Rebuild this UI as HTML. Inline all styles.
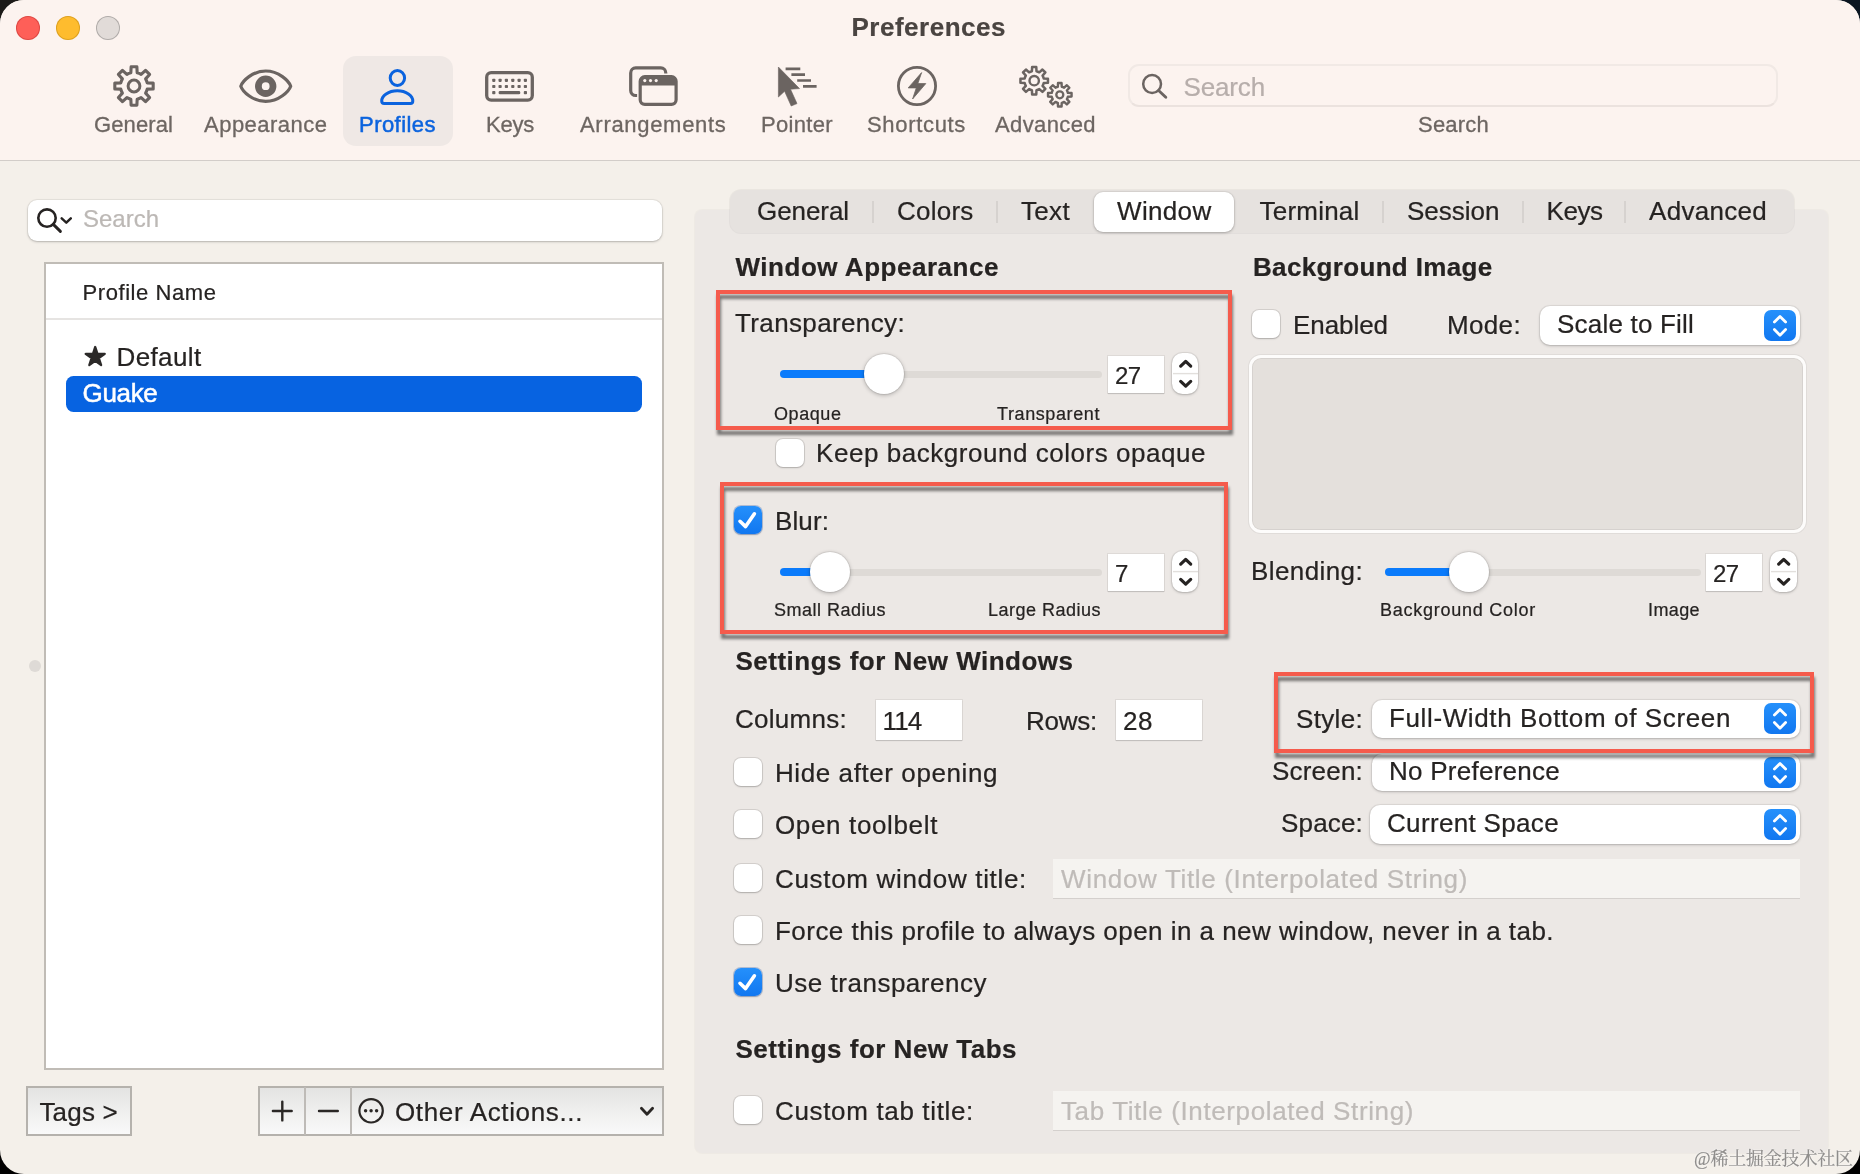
<!DOCTYPE html>
<html lang="en"><head><meta charset="utf-8"><title>Preferences</title>
<style>
html,body{margin:0;padding:0;}
body{width:1860px;height:1174px;overflow:hidden;background:#000;font-family:"Liberation Sans",sans-serif;color:#262322;position:relative;}
.abs,.t,.win *{position:absolute;box-sizing:border-box;}
.t{white-space:pre;height:40px;line-height:40px;-webkit-text-stroke:0.22px currentColor;}
.win{will-change:transform;position:absolute;left:0;top:0;width:1860px;height:1174px;border-radius:24px;background:#f4f0ea;overflow:hidden;}
.titlebar{left:0;top:0;width:1860px;height:161.2px;background:#fcf3ef;border-bottom:1.4px solid #d2cdc9;}
.tl{width:24px;height:24px;border-radius:50%;top:16px;}
.cb{width:27.5px;height:27.4px;margin:0.2px 0 0 0.2px;border-radius:7px;background:#fff;box-shadow:0 0 0 1px rgba(0,0,0,.10),0 1px 2px rgba(0,0,0,.18);}
.cb.on{background:linear-gradient(#2590fb,#1177f0);box-shadow:0 0 0 1px rgba(0,60,160,.25),0 1px 2px rgba(0,0,0,.2);}
.fld{background:#fff;box-shadow:0 0 0 1px rgba(0,0,0,.06),0 1px 1px rgba(0,0,0,.12);}
.fld.dis{background:#f5f3f0;box-shadow:0 1px 0 rgba(0,0,0,.10);}
.sel{background:#fff;border-radius:10px;box-shadow:0 0 0 1px rgba(0,0,0,.05),0 1px 3px rgba(0,0,0,.22);}
.selbtn{width:32px;height:31px;border-radius:7px;background:linear-gradient(#2590fb,#1177f0);}
.step{width:26.6px;height:40.6px;border-radius:10.5px;background:#fff;box-shadow:0 0 0 1px rgba(0,0,0,.06),0 1px 3px rgba(0,0,0,.22);}
.track{height:7px;border-radius:4px;background:#dedad6;}
.fill{height:8px;border-radius:4px;background:#0b7bfb;}
.knob{width:40px;height:40px;border-radius:50%;background:#fff;box-shadow:0 0 0 1px rgba(0,0,0,.06),0 1px 4px rgba(0,0,0,.28);}
.red{border:4.2px solid #f55b4c;filter:drop-shadow(1px 5px 1.5px rgba(0,0,0,.5));}
.btn{border:2px solid #b5b2ad;background:linear-gradient(#e3e3e2,#eeeeed 45%,#f9f9f9);}
svg{position:absolute;overflow:visible;}

</style></head>
<body>
<div class="abs" style="left:0;top:0;width:60px;height:60px;background:#1c1a18"></div><div class="abs" style="left:1800px;top:0;width:60px;height:60px;background:#0a1520"></div>
<div class="win">
<div class="titlebar"></div>
<div class="tl" style="left:16px;background:#fe5f58;box-shadow:inset 0 0 0 1px rgba(160,30,30,.35)"></div>
<div class="tl" style="left:56px;background:#febc2e;box-shadow:inset 0 0 0 1px rgba(160,110,0,.35)"></div>
<div class="tl" style="left:96px;background:#e1dbd8;box-shadow:inset 0 0 0 1px rgba(0,0,0,.22)"></div>
<div class="t" style="left:851.5px;top:6.5px;font-size:26px;font-weight:700;color:#4a4441;letter-spacing:0.510px;">Preferences</div>
<div style="left:343px;top:56px;width:110px;height:90px;border-radius:13px;background:#efe8e5"></div>
<div class="t" style="left:94px;top:105px;font-size:22px;color:#6d6662;letter-spacing:0.103px;-webkit-text-stroke:0.3px currentColor;">General</div>
<div class="t" style="left:204px;top:105px;font-size:22px;color:#6d6662;letter-spacing:0.484px;-webkit-text-stroke:0.3px currentColor;">Appearance</div>
<div class="t" style="left:359px;top:105px;font-size:22px;color:#0b63de;letter-spacing:0.455px;-webkit-text-stroke:0.5px currentColor;">Profiles</div>
<div class="t" style="left:486px;top:105px;font-size:22px;color:#6d6662;letter-spacing:-0.230px;-webkit-text-stroke:0.3px currentColor;">Keys</div>
<div class="t" style="left:580px;top:105px;font-size:22px;color:#6d6662;letter-spacing:0.693px;-webkit-text-stroke:0.3px currentColor;">Arrangements</div>
<div class="t" style="left:761px;top:105px;font-size:22px;color:#6d6662;letter-spacing:0.326px;-webkit-text-stroke:0.3px currentColor;">Pointer</div>
<div class="t" style="left:867px;top:105px;font-size:22px;color:#6d6662;letter-spacing:0.674px;-webkit-text-stroke:0.3px currentColor;">Shortcuts</div>
<div class="t" style="left:995px;top:105px;font-size:22px;color:#6d6662;letter-spacing:0.393px;-webkit-text-stroke:0.3px currentColor;">Advanced</div>
<div class="t" style="left:1418px;top:105px;font-size:22px;color:#6d6662;letter-spacing:0.214px;-webkit-text-stroke:0.3px currentColor;">Search</div>
<div style="left:1128.4px;top:64.2px;width:650px;height:43px;border-radius:11px;background:#fcf3ef;border:2px solid #f1e9e5;border-bottom-color:#ebe2de"></div>
<div class="t" style="left:1183.5px;top:66.5px;font-size:26px;color:#b7aeab;letter-spacing:-0.148px;">Search</div>
<svg style="left:1140px;top:72px" width="30" height="30" viewBox="0 0 30 30"><circle cx="12.1" cy="12" r="8.9" fill="none" stroke="#6b6461" stroke-width="2.5"/><path d="M18.6 18.5 L25.8 25.2" stroke="#6b6461" stroke-width="2.9" stroke-linecap="round"/></svg>
<svg style="left:0;top:0" width="1860" height="160" viewBox="0 0 1860 160"><path d="M130.83 72.78L131.12 66.82L136.88 66.82L137.17 72.78A13.60 13.60 0 0 1 141.11 74.40L145.53 70.40L149.60 74.47L145.60 78.89A13.60 13.60 0 0 1 147.22 82.83L153.18 83.12L153.18 88.88L147.22 89.17A13.60 13.60 0 0 1 145.60 93.11L149.60 97.53L145.53 101.60L141.11 97.60A13.60 13.60 0 0 1 137.17 99.22L136.88 105.18L131.12 105.18L130.83 99.22A13.60 13.60 0 0 1 126.89 97.60L122.47 101.60L118.40 97.53L122.40 93.11A13.60 13.60 0 0 1 120.78 89.17L114.82 88.88L114.82 83.12L120.78 82.83A13.60 13.60 0 0 1 122.40 78.89L118.40 74.47L122.47 70.40L126.89 74.40A13.60 13.60 0 0 1 130.83 72.78Z" fill="none" stroke="#6b6461" stroke-width="3.1" stroke-linejoin="round"/><circle cx="134" cy="86" r="5.9" fill="none" stroke="#6b6461" stroke-width="3"/></svg>
<svg style="left:0;top:0" width="1860" height="160" viewBox="0 0 1860 160"><path d="M240.8 86.2 C242.6 81 252.5 71 265.7 71 C278.9 71 288.8 81 290.7 86.2 C288.8 91.4 278.9 101.4 265.7 101.4 C252.5 101.4 242.6 91.4 240.8 86.2Z" fill="none" stroke="#6b6461" stroke-width="3.2" stroke-linejoin="round"/><circle cx="265.7" cy="86.2" r="7.3" fill="none" stroke="#6b6461" stroke-width="6.8"/></svg>
<svg style="left:0;top:0" width="1860" height="160" viewBox="0 0 1860 160"><ellipse cx="397.4" cy="78" rx="7.2" ry="7.5" fill="none" stroke="#0b63de" stroke-width="3"/><path d="M384.2 103.6 H410.4 Q412.8 103.6 412.8 101 C412.8 96 406.3 90.8 397.3 90.8 C388.3 90.8 381.7 96 381.7 101 Q381.7 103.6 384.2 103.6Z" fill="none" stroke="#0b63de" stroke-width="3" stroke-linejoin="round"/></svg>
<svg style="left:0;top:0" width="1860" height="160" viewBox="0 0 1860 160"><rect x="486.7" y="72.7" width="45.6" height="27.4" rx="4.5" fill="none" stroke="#6b6461" stroke-width="3.3"/><rect x="492.2" y="78.7" width="3.2" height="3.2" rx="0.8" fill="#6b6461"/><rect x="498.5" y="78.7" width="3.2" height="3.2" rx="0.8" fill="#6b6461"/><rect x="504.8" y="78.7" width="3.2" height="3.2" rx="0.8" fill="#6b6461"/><rect x="511.2" y="78.7" width="3.2" height="3.2" rx="0.8" fill="#6b6461"/><rect x="517.5" y="78.7" width="3.2" height="3.2" rx="0.8" fill="#6b6461"/><rect x="523.8" y="78.7" width="3.2" height="3.2" rx="0.8" fill="#6b6461"/><rect x="492.2" y="84.9" width="3.2" height="3.2" rx="0.8" fill="#6b6461"/><rect x="498.5" y="84.9" width="3.2" height="3.2" rx="0.8" fill="#6b6461"/><rect x="504.8" y="84.9" width="3.2" height="3.2" rx="0.8" fill="#6b6461"/><rect x="511.2" y="84.9" width="3.2" height="3.2" rx="0.8" fill="#6b6461"/><rect x="517.5" y="84.9" width="3.2" height="3.2" rx="0.8" fill="#6b6461"/><rect x="523.8" y="84.9" width="3.2" height="3.2" rx="0.8" fill="#6b6461"/><rect x="492.2" y="91.1" width="3.2" height="3.2" rx="0.8" fill="#6b6461"/><rect x="523.8" y="91.1" width="3.2" height="3.2" rx="0.8" fill="#6b6461"/><rect x="498.6" y="91.1" width="21.7" height="3.2" rx="1.4" fill="#6b6461"/></svg>
<svg style="left:0;top:0" width="1860" height="160" viewBox="0 0 1860 160"><rect x="630.7" y="67.9" width="35.1" height="27.6" rx="5" fill="none" stroke="#6b6461" stroke-width="3.2"/><rect x="638.6" y="75.1" width="39.1" height="30.9" rx="6.2" fill="#fcf3ef" stroke="#fcf3ef" stroke-width="3"/><rect x="640.2" y="76.7" width="35.9" height="27.7" rx="4.6" fill="#fcf3ef" stroke="#6b6461" stroke-width="3.2"/><path d="M640 85.4 V81 Q640 76.5 644.5 76.5 H671.8 Q676.3 76.5 676.3 81 V85.4Z" fill="#6b6461"/><circle cx="644.8" cy="80.6" r="1.6" fill="#fcf3ef"/><circle cx="650.5" cy="80.6" r="1.6" fill="#fcf3ef"/><circle cx="656.2" cy="80.6" r="1.6" fill="#fcf3ef"/></svg>
<svg style="left:0;top:0" width="1860" height="160" viewBox="0 0 1860 160"><path d="M778.4 67 V97 L784.6 91.3 L791.2 106 L797 103.6 L790.5 89.2 L799.5 88.6Z" fill="#6b6461" stroke="#6b6461" stroke-width="0.6" stroke-linejoin="round"/><path d="M785.6 68.9H800.3 M791.4 74.7H805 M797.2 80.5H811 M803 86.3H816.6" stroke="#6b6461" stroke-width="2.7"/></svg>
<svg style="left:0;top:0" width="1860" height="160" viewBox="0 0 1860 160"><circle cx="917" cy="86" r="18.6" fill="none" stroke="#6b6461" stroke-width="2.8"/><path d="M921.6 72.6 L908.2 87.9 H916.3 L912.6 99 L925.8 83.6 H917.8Z" fill="#6b6461" stroke="#6b6461" stroke-width="0.8" stroke-linejoin="round"/></svg>
<svg style="left:0;top:0" width="1860" height="160" viewBox="0 0 1860 160"><path d="M1031.91 71.17L1032.13 66.95L1036.27 66.95L1036.49 71.17A9.80 9.80 0 0 1 1039.32 72.34L1042.46 69.52L1045.38 72.44L1042.56 75.58A9.80 9.80 0 0 1 1043.73 78.41L1047.95 78.63L1047.95 82.77L1043.73 82.99A9.80 9.80 0 0 1 1042.56 85.82L1045.38 88.96L1042.46 91.88L1039.32 89.06A9.80 9.80 0 0 1 1036.49 90.23L1036.27 94.45L1032.13 94.45L1031.91 90.23A9.80 9.80 0 0 1 1029.08 89.06L1025.94 91.88L1023.02 88.96L1025.84 85.82A9.80 9.80 0 0 1 1024.67 82.99L1020.45 82.77L1020.45 78.63L1024.67 78.41A9.80 9.80 0 0 1 1025.84 75.58L1023.02 72.44L1025.94 69.52L1029.08 72.34A9.80 9.80 0 0 1 1031.91 71.17Z" fill="none" stroke="#6b6461" stroke-width="2.5" stroke-linejoin="round"/><circle cx="1034.2" cy="80.7" r="4.7" fill="none" stroke="#6b6461" stroke-width="2.4"/><path d="M1057.86 86.73L1058.03 83.03L1061.57 83.03L1061.74 86.73A8.30 8.30 0 0 1 1064.14 87.72L1066.87 85.23L1069.37 87.73L1066.88 90.46A8.30 8.30 0 0 1 1067.87 92.86L1071.57 93.03L1071.57 96.57L1067.87 96.74A8.30 8.30 0 0 1 1066.88 99.14L1069.37 101.87L1066.87 104.37L1064.14 101.88A8.30 8.30 0 0 1 1061.74 102.87L1061.57 106.57L1058.03 106.57L1057.86 102.87A8.30 8.30 0 0 1 1055.46 101.88L1052.73 104.37L1050.23 101.87L1052.72 99.14A8.30 8.30 0 0 1 1051.73 96.74L1048.03 96.57L1048.03 93.03L1051.73 92.86A8.30 8.30 0 0 1 1052.72 90.46L1050.23 87.73L1052.73 85.23L1055.46 87.72A8.30 8.30 0 0 1 1057.86 86.73Z" fill="none" stroke="#6b6461" stroke-width="2.4" stroke-linejoin="round"/><circle cx="1059.8" cy="94.8" r="3.5" fill="none" stroke="#6b6461" stroke-width="2.3"/></svg>
<div style="left:28px;top:200px;width:634px;height:40.5px;border-radius:9px;background:#fff;box-shadow:0 0 0 1px rgba(0,0,0,.05),0 1px 2.5px rgba(0,0,0,.22)"></div>
<svg style="left:36px;top:206px" width="40" height="30" viewBox="0 0 40 30"><circle cx="11" cy="12.1" r="8.7" fill="none" stroke="#262322" stroke-width="2.6"/><path d="M17.3 18.4 L24.4 25.4" stroke="#262322" stroke-width="2.9" stroke-linecap="round"/><path d="M25.7 12.4 L30.3 16.6 L34.8 12.4" fill="none" stroke="#262322" stroke-width="2.5" stroke-linecap="round" stroke-linejoin="round"/></svg>
<div class="t" style="left:83px;top:199.3px;font-size:24px;color:#bcb8b5;letter-spacing:-0.008px;">Search</div>
<div style="left:44px;top:262px;width:620px;height:808px;background:#fff;border:2px solid #c0bcb6"></div>
<div class="t" style="left:82.5px;top:272.6px;font-size:22px;letter-spacing:0.570px;">Profile Name</div>
<div style="left:46px;top:318px;width:616px;height:2px;background:#e6e4e2"></div>
<svg style="left:78px;top:338px" width="36" height="36" viewBox="0 0 36 36"><text x="17.2" y="27.4" text-anchor="middle" font-family="DejaVu Sans, sans-serif" font-size="25" fill="#2b2928" stroke="#2b2928" stroke-width="2.2" stroke-linejoin="round">★</text></svg>
<div class="t" style="left:116.5px;top:336.6px;font-size:26px;letter-spacing:0.373px;">Default</div>
<div style="left:66px;top:376px;width:576px;height:35.7px;border-radius:7.5px;background:#0763e1"></div>
<div class="t" style="left:82.5px;top:372.6px;font-size:26px;color:#fff;letter-spacing:-0.322px;-webkit-text-stroke:0.5px #fff;">Guake</div>
<div style="left:29px;top:659.9px;width:12px;height:12px;border-radius:50%;background:#dedad6"></div>
<div class="btn" style="left:26px;top:1086px;width:106px;height:50px"></div>
<div class="t" style="left:39.4px;top:1091.6px;font-size:26px;letter-spacing:0.195px;">Tags &gt;</div>
<div class="btn" style="left:258px;top:1086px;width:406px;height:50px"></div>
<div style="left:304px;top:1087px;width:2px;height:48px;background:#bebbb7"></div>
<div style="left:350px;top:1087px;width:2px;height:48px;background:#bebbb7"></div>
<svg style="left:258px;top:1086px" width="100" height="50" viewBox="0 0 100 50"><path d="M14.9 25H33.7 M24.3 15.6V34.4 M61 25H79.8" stroke="#2a2725" stroke-width="2.4" stroke-linecap="round"/></svg>
<div class="t" style="left:395px;top:1091.6px;font-size:26px;letter-spacing:0.641px;">Other Actions...</div>
<svg style="left:350px;top:1086px" width="314" height="50" viewBox="0 0 314 50"><circle cx="21.1" cy="24.8" r="11.7" fill="none" stroke="#2a2725" stroke-width="2.2"/><circle cx="15.6" cy="24.8" r="1.7" fill="#2a2725"/><circle cx="21.1" cy="24.8" r="1.7" fill="#2a2725"/><circle cx="26.6" cy="24.8" r="1.7" fill="#2a2725"/><path d="M291.4 22.2 L297 28.2 L302.6 22.2" fill="none" stroke="#2a2725" stroke-width="2.8" stroke-linecap="round" stroke-linejoin="round"/></svg>
<div style="left:694.5px;top:210px;width:1133px;height:942.5px;border-radius:7px;background:#ece8e5;box-shadow:0 0 0 1px rgba(0,0,0,.025)"></div>
<div style="left:730px;top:190px;width:1064px;height:43px;border-radius:11px;background:#e6e2df;box-shadow:0 0 0 1px rgba(0,0,0,.04)"></div>
<div style="left:1094px;top:192px;width:140px;height:40px;border-radius:9px;background:#fff;box-shadow:0 1px 3px rgba(0,0,0,.25),0 0 0 1px rgba(0,0,0,.04)"></div>
<div style="left:872px;top:201px;width:2px;height:22px;background:#d6d2cf"></div>
<div style="left:996px;top:201px;width:2px;height:22px;background:#d6d2cf"></div>
<div style="left:1382px;top:201px;width:2px;height:22px;background:#d6d2cf"></div>
<div style="left:1522px;top:201px;width:2px;height:22px;background:#d6d2cf"></div>
<div style="left:1624px;top:201px;width:2px;height:22px;background:#d6d2cf"></div>
<div class="t" style="left:757px;top:191px;font-size:26px;letter-spacing:-0.071px;">General</div>
<div class="t" style="left:897px;top:191px;font-size:26px;letter-spacing:0.227px;">Colors</div>
<div class="t" style="left:1021px;top:191px;font-size:26px;letter-spacing:0.328px;">Text</div>
<div class="t" style="left:1117px;top:191px;font-size:26px;letter-spacing:0.336px;">Window</div>
<div class="t" style="left:1259.5px;top:191px;font-size:26px;letter-spacing:0.219px;">Terminal</div>
<div class="t" style="left:1407px;top:191px;font-size:26px;letter-spacing:0.000px;">Session</div>
<div class="t" style="left:1546.5px;top:191px;font-size:26px;letter-spacing:-0.453px;">Keys</div>
<div class="t" style="left:1649px;top:191px;font-size:26px;letter-spacing:0.293px;">Advanced</div>
<div class="t" style="left:735.5px;top:247px;font-size:26px;font-weight:700;letter-spacing:0.528px;">Window Appearance</div>
<div class="t" style="left:1253px;top:247px;font-size:26px;font-weight:700;letter-spacing:0.340px;">Background Image</div>
<div class="t" style="left:735.5px;top:641px;font-size:26px;font-weight:700;letter-spacing:0.491px;">Settings for New Windows</div>
<div class="t" style="left:735.5px;top:1029px;font-size:26px;font-weight:700;letter-spacing:0.495px;">Settings for New Tabs</div>
<div class="t" style="left:735px;top:302.5px;font-size:26px;letter-spacing:0.368px;">Transparency:</div>
<div class="track" style="left:780px;top:370.5px;width:321.5px"></div>
<div class="fill" style="left:780px;top:370px;width:104px"></div>
<div class="knob" style="left:864px;top:354px"></div>
<div class="fld" style="left:1108px;top:356px;width:56px;height:37px"></div>
<div class="t" style="left:1115px;top:355.5px;font-size:24px;letter-spacing:-0.602px;">27</div>
<div class="step" style="left:1171.6px;top:353px"></div>
<svg style="left:1171.6px;top:353px" width="27" height="41" viewBox="0 0 27 41"><path d="M8.7 13.1 L13.7 8.4 L18.7 13.1 M8.7 28.4 L13.7 33.1 L18.7 28.4" fill="none" stroke="#262322" stroke-width="3.2" stroke-linecap="round" stroke-linejoin="round"/><path d="M1 20.6H26" stroke="#e2dfdc" stroke-width="1.4"/></svg>
<div class="t" style="left:774px;top:394px;font-size:18px;letter-spacing:0.573px;">Opaque</div>
<div class="t" style="left:997px;top:394px;font-size:18px;letter-spacing:0.601px;">Transparent</div>
<div class="cb" style="left:776px;top:439px"></div>
<div class="t" style="left:816px;top:433px;font-size:26px;letter-spacing:0.538px;">Keep background colors opaque</div>
<div class="red" style="left:716px;top:289.8px;width:515.8px;height:140.1px"></div>
<div class="cb on" style="left:734px;top:506px"></div>
<svg style="left:734px;top:506px" width="28" height="28" viewBox="0 0 28 28"><path d="M6 15.3 L11.6 20.6 L20.4 7.8" fill="none" stroke="#fff" stroke-width="3.6" stroke-linecap="round" stroke-linejoin="round"/></svg>
<div class="t" style="left:775px;top:501px;font-size:26px;letter-spacing:0.106px;">Blur:</div>
<div class="track" style="left:780px;top:568.5px;width:321.5px"></div>
<div class="fill" style="left:780px;top:568px;width:50px"></div>
<div class="knob" style="left:810px;top:552px"></div>
<div class="fld" style="left:1108px;top:554px;width:56px;height:37px"></div>
<div class="t" style="left:1115px;top:553.5px;font-size:24px;">7</div>
<div class="step" style="left:1171.6px;top:551px"></div>
<svg style="left:1171.6px;top:551px" width="27" height="41" viewBox="0 0 27 41"><path d="M8.7 13.1 L13.7 8.4 L18.7 13.1 M8.7 28.4 L13.7 33.1 L18.7 28.4" fill="none" stroke="#262322" stroke-width="3.2" stroke-linecap="round" stroke-linejoin="round"/><path d="M1 20.6H26" stroke="#e2dfdc" stroke-width="1.4"/></svg>
<div class="t" style="left:774px;top:590px;font-size:18px;letter-spacing:0.496px;">Small Radius</div>
<div class="t" style="left:988px;top:590px;font-size:18px;letter-spacing:0.493px;">Large Radius</div>
<div class="red" style="left:720px;top:482.3px;width:508.2px;height:151.5px"></div>
<div class="t" style="left:735px;top:699px;font-size:26px;letter-spacing:0.271px;">Columns:</div>
<div class="fld" style="left:876px;top:700px;width:86px;height:40px"></div>
<div class="t" style="left:882.5px;top:701px;font-size:26px;letter-spacing:-0.818px;">114</div>
<div class="t" style="left:1026px;top:701px;font-size:26px;letter-spacing:-0.250px;">Rows:</div>
<div class="fld" style="left:1116px;top:700px;width:86px;height:40px"></div>
<div class="t" style="left:1123px;top:701px;font-size:26px;letter-spacing:0.539px;">28</div>
<div class="cb" style="left:734px;top:758px"></div>
<div class="t" style="left:775px;top:753px;font-size:26px;letter-spacing:0.584px;">Hide after opening</div>
<div class="cb" style="left:734px;top:810px"></div>
<div class="t" style="left:775px;top:805px;font-size:26px;letter-spacing:0.641px;">Open toolbelt</div>
<div class="cb" style="left:734px;top:864px"></div>
<div class="t" style="left:775px;top:859px;font-size:26px;letter-spacing:0.679px;">Custom window title:</div>
<div class="cb" style="left:734px;top:916px"></div>
<div class="t" style="left:775px;top:911px;font-size:26px;letter-spacing:0.460px;">Force this profile to always open in a new window, never in a tab.</div>
<div class="cb on" style="left:734px;top:968px"></div>
<svg style="left:734px;top:968px" width="28" height="28" viewBox="0 0 28 28"><path d="M6 15.3 L11.6 20.6 L20.4 7.8" fill="none" stroke="#fff" stroke-width="3.6" stroke-linecap="round" stroke-linejoin="round"/></svg>
<div class="t" style="left:775px;top:963px;font-size:26px;letter-spacing:0.515px;">Use transparency</div>
<div class="cb" style="left:734px;top:1096px"></div>
<div class="t" style="left:775px;top:1091px;font-size:26px;letter-spacing:0.655px;">Custom tab title:</div>
<div class="fld dis" style="left:1053px;top:859px;width:747px;height:39px"></div>
<div class="t" style="left:1061px;top:859px;font-size:26px;color:#bfbbb8;letter-spacing:0.665px;">Window Title (Interpolated String)</div>
<div class="fld dis" style="left:1053px;top:1091px;width:747px;height:39px"></div>
<div class="t" style="left:1061px;top:1091px;font-size:26px;color:#bfbbb8;letter-spacing:0.618px;">Tab Title (Interpolated String)</div>
<div class="cb" style="left:1252px;top:310px"></div>
<div class="t" style="left:1293px;top:305px;font-size:26px;letter-spacing:-0.060px;">Enabled</div>
<div class="t" style="left:1447px;top:305px;font-size:26px;letter-spacing:0.347px;">Mode:</div>
<div class="sel" style="left:1540px;top:306px;width:260px;height:39px"></div>
<div class="selbtn" style="left:1764px;top:309.7px"></div>
<svg style="left:1764px;top:309.7px" width="32" height="32" viewBox="0 0 32 32"><path d="M10.4 12.1 L16 6.5 L21.6 12.1 M10.4 19.6 L16 25.2 L21.6 19.6" fill="none" stroke="#fff" stroke-width="2.8" stroke-linecap="round" stroke-linejoin="round"/></svg>
<div class="t" style="left:1557px;top:304px;font-size:26px;letter-spacing:0.201px;">Scale to Fill</div>
<div style="left:1248.5px;top:354.5px;width:557px;height:178px;border-radius:12px;background:#e4e0dc;border:3.5px solid #fdfcfb;box-shadow:0 0 0 1px rgba(0,0,0,.05), inset 0 0 0 1px rgba(0,0,0,.06)"></div>
<div class="t" style="left:1251px;top:551px;font-size:26px;letter-spacing:0.398px;">Blending:</div>
<div class="track" style="left:1384.5px;top:568.5px;width:316.0px"></div>
<div class="fill" style="left:1384.5px;top:568px;width:84.5px"></div>
<div class="knob" style="left:1449px;top:552px"></div>
<div class="fld" style="left:1706px;top:554px;width:56px;height:37px"></div>
<div class="t" style="left:1713px;top:553.5px;font-size:24px;letter-spacing:-0.602px;">27</div>
<div class="step" style="left:1770.2px;top:551px"></div>
<svg style="left:1770.2px;top:551px" width="27" height="41" viewBox="0 0 27 41"><path d="M8.7 13.1 L13.7 8.4 L18.7 13.1 M8.7 28.4 L13.7 33.1 L18.7 28.4" fill="none" stroke="#262322" stroke-width="3.2" stroke-linecap="round" stroke-linejoin="round"/><path d="M1 20.6H26" stroke="#e2dfdc" stroke-width="1.4"/></svg>
<div class="t" style="left:1380px;top:590px;font-size:18px;letter-spacing:0.744px;">Background Color</div>
<div class="t" style="left:1648px;top:590px;font-size:18px;letter-spacing:0.394px;">Image</div>
<div class="t" style="left:1272px;top:750.5px;font-size:26px;letter-spacing:0.199px;">Screen:</div>
<div class="sel" style="left:1372px;top:754px;width:428px;height:37px"></div>
<div class="selbtn" style="left:1764px;top:756.7px"></div>
<svg style="left:1764px;top:756.7px" width="32" height="32" viewBox="0 0 32 32"><path d="M10.4 12.1 L16 6.5 L21.6 12.1 M10.4 19.6 L16 25.2 L21.6 19.6" fill="none" stroke="#fff" stroke-width="2.8" stroke-linecap="round" stroke-linejoin="round"/></svg>
<div class="t" style="left:1389px;top:751px;font-size:26px;letter-spacing:0.257px;">No Preference</div>
<div class="t" style="left:1281px;top:803px;font-size:26px;letter-spacing:0.174px;">Space:</div>
<div class="sel" style="left:1370px;top:805px;width:430px;height:39px"></div>
<div class="selbtn" style="left:1764px;top:808.7px"></div>
<svg style="left:1764px;top:808.7px" width="32" height="32" viewBox="0 0 32 32"><path d="M10.4 12.1 L16 6.5 L21.6 12.1 M10.4 19.6 L16 25.2 L21.6 19.6" fill="none" stroke="#fff" stroke-width="2.8" stroke-linecap="round" stroke-linejoin="round"/></svg>
<div class="t" style="left:1387px;top:803px;font-size:26px;letter-spacing:0.334px;">Current Space</div>
<div style="left:1279px;top:677px;width:529px;height:71px;background:#ece8e5"></div>
<div class="t" style="left:1296px;top:698.5px;font-size:26px;letter-spacing:0.328px;">Style:</div>
<div class="sel" style="left:1372px;top:700px;width:428px;height:38px"></div>
<div class="selbtn" style="left:1764px;top:703.2px"></div>
<svg style="left:1764px;top:703.2px" width="32" height="32" viewBox="0 0 32 32"><path d="M10.4 12.1 L16 6.5 L21.6 12.1 M10.4 19.6 L16 25.2 L21.6 19.6" fill="none" stroke="#fff" stroke-width="2.8" stroke-linecap="round" stroke-linejoin="round"/></svg>
<div class="t" style="left:1389px;top:697.5px;font-size:26px;letter-spacing:0.625px;">Full-Width Bottom of Screen</div>
<div class="red" style="left:1274px;top:672.2px;width:539.6px;height:80.4px"></div>
<div class="t" style="left:1694px;top:1138.5px;font-size:18px;font-family:'Liberation Serif','Noto Serif CJK SC',serif;color:#8f8d8b;text-shadow:0 0 2px #fff,0 0 1px #fff;letter-spacing:-0.2px">@稀土掘金技术社区</div>
</div>
</body></html>
